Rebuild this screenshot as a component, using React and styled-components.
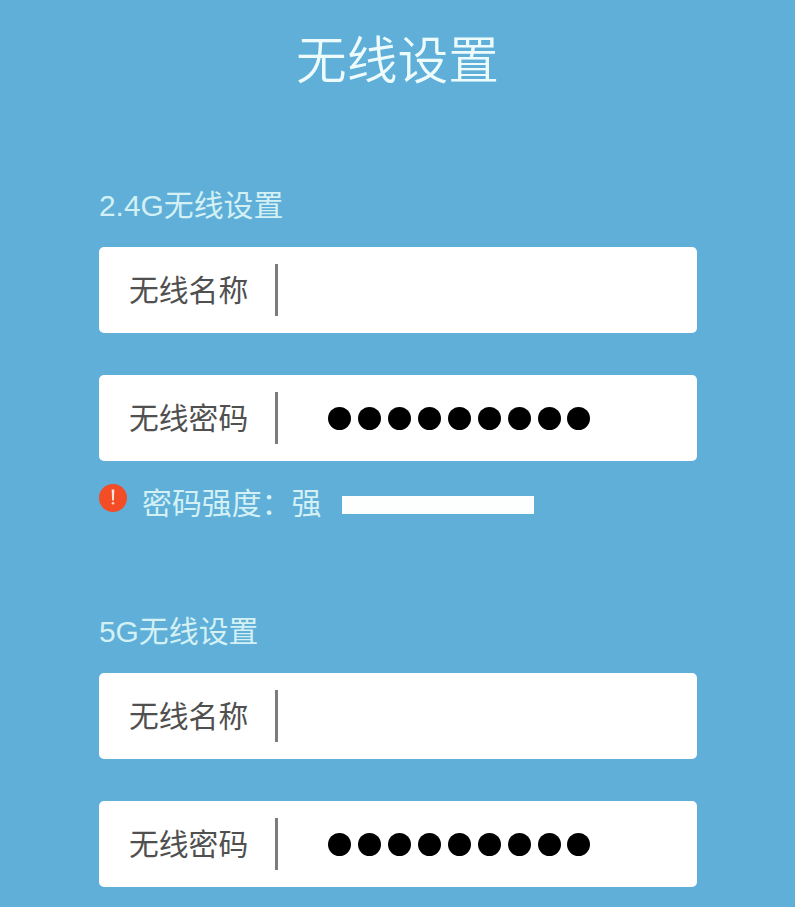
import React from "react";
import styled, { createGlobalStyle } from "styled-components";

const GlobalStyle = createGlobalStyle`
  *, *::before, *::after { box-sizing: border-box; }
  body { margin: 0; background: #5fafd9; overflow: hidden; }
`;

const Page = styled.main`
  width: 795px;
  height: 907px;
  overflow: hidden;
  background: #5fafd9;
  padding: 0 99px;
  font-family: "Liberation Sans", "Noto Sans CJK SC", sans-serif;
  display: flex;
  flex-direction: column;
`;

const Title = styled.h1`
  margin: 25px 0 0;
  height: 64px;
  line-height: 64px;
  font-size: 50.7px;
  font-weight: 350;
  font-family: "Noto Sans CJK SC", sans-serif;
  color: #edfbfd;
  text-align: center;
`;

const Section = styled.section`
  display: flex;
  flex-direction: column;
  margin-top: ${(p) => p.$gap}px;
`;

const SectionTitle = styled.h2`
  margin: 0 0 21px;
  height: 40px;
  line-height: 40px;
  font-size: 29.9px;
  font-weight: 400;
  color: #d3f1f5;
`;

const Field = styled.div`
  display: flex;
  align-items: center;
  flex: none;
  height: 86px;
  width: 598px;
  padding-left: 30px;
  background: #fff;
  border-radius: 5px;
  & + & { margin-top: 42px; }
`;

const Label = styled.label`
  width: 146px;
  font-size: 29.8px;
  line-height: 40px;
  padding-top: 1px;
  color: #505050;
`;

const Divider = styled.span`
  width: 3px;
  height: 52px;
  background: #7c7c7c;
`;

const Dots = styled.div`
  display: flex;
  gap: 6.9px;
  margin-left: 50.3px;
`;

const Dot = styled.span`
  width: 23px;
  height: 23px;
  border-radius: 50%;
  background: #000;
`;

const Strength = styled.div`
  display: flex;
  align-items: flex-start;
  height: 40px;
  margin-top: 23px;
  font-size: 29.9px;
  line-height: 40px;
  color: #d3f1f5;
`;

const StrengthText = styled.span`
  margin-left: 15px;
  width: 200px;
  white-space: nowrap;
`;

const Bar = styled.span`
  width: 192px;
  height: 18px;
  margin-top: 12px;
  background: #fdfffe;
`;

const AlertIcon = () => (
  <svg width="28" height="28" viewBox="0 0 28 28">
    <circle cx="14" cy="14" r="14" fill="#f24d27" />
    <path d="M12.7 5.5h2.6l-.4 11h-1.8z" fill="#ffe5db" />
    <circle cx="14" cy="19.3" r="1.3" fill="#ffd0c0" />
  </svg>
);

const NameField = () => (
  <Field><Label>无线名称</Label><Divider /></Field>
);

const PasswordField = () => (
  <Field>
    <Label>无线密码</Label>
    <Divider />
    <Dots>{Array.from({ length: 9 }, (_, i) => <Dot key={i} />)}</Dots>
  </Field>
);

export default function App() {
  return (
    <>
      <GlobalStyle />
      <Page>
        <Title>无线设置</Title>
        <Section $gap={97}>
          <SectionTitle>2.4G无线设置</SectionTitle>
          <NameField />
          <PasswordField />
          <Strength>
            <AlertIcon />
            <StrengthText>密码强度：强</StrengthText>
            <Bar />
          </Strength>
        </Section>
        <Section $gap={88}>
          <SectionTitle>5G无线设置</SectionTitle>
          <NameField />
          <PasswordField />
        </Section>
      </Page>
    </>
  );
}
